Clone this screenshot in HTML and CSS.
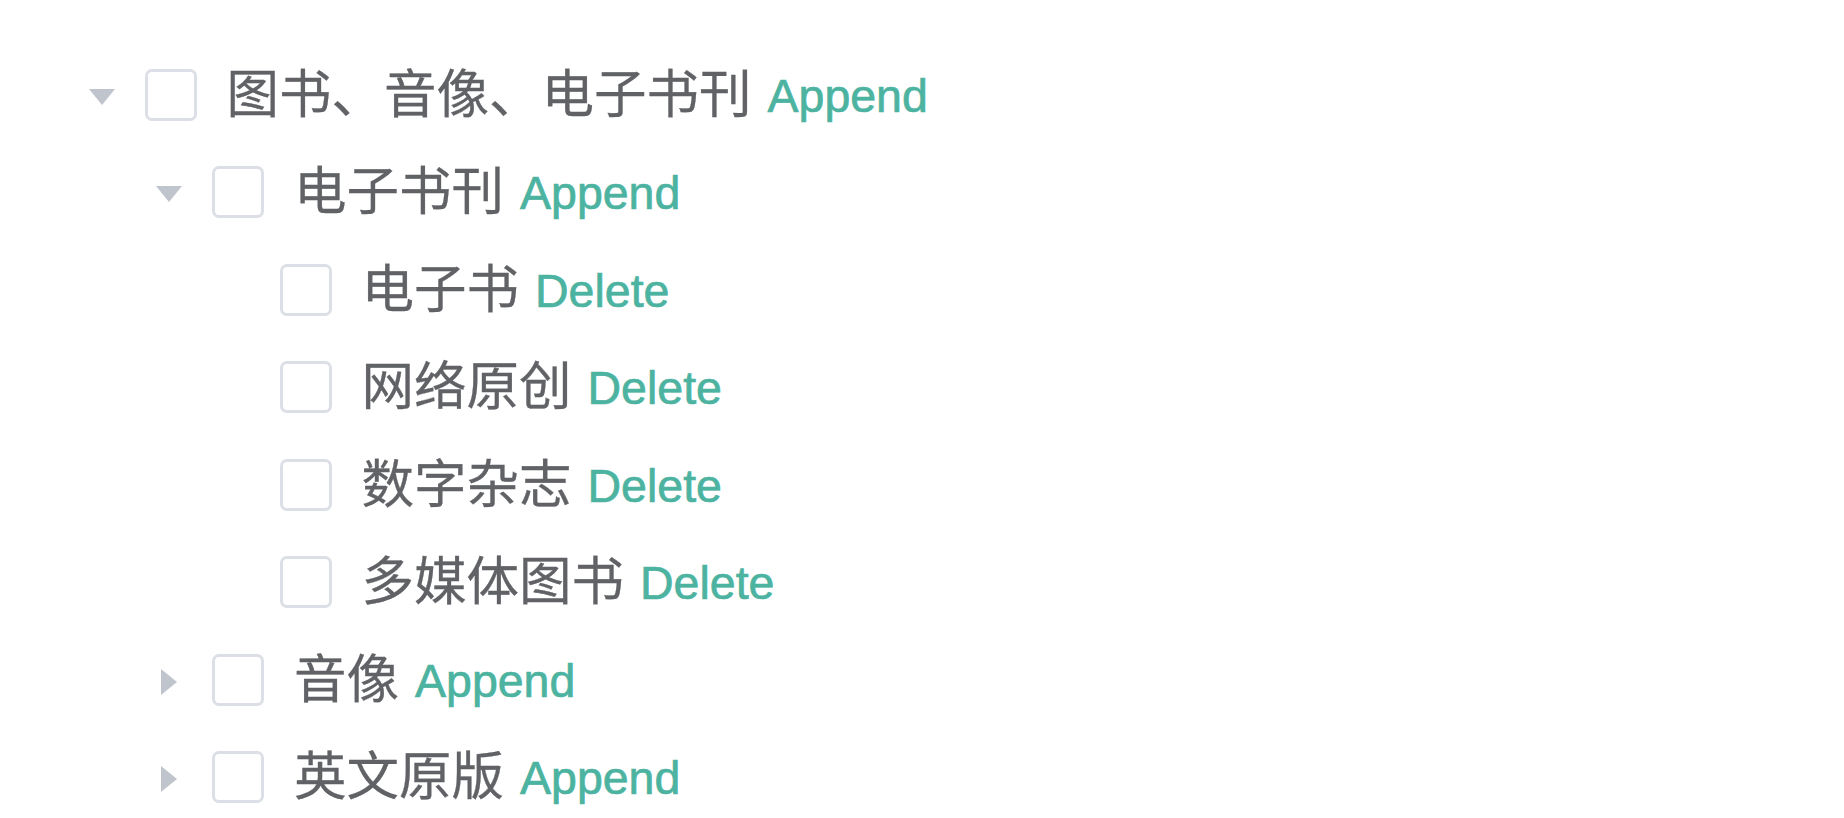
FILE: index.html
```html
<!DOCTYPE html>
<html lang="zh-CN">
<head>
    <meta charset="UTF-8">
    <meta name="viewport" content="width=device-width, initial-scale=1.0">
    <title>Tree</title>
    <link rel="stylesheet" href="styles.css">
</head>
<body>

<div class="tree">
    <div class="tree-node level-1">
        <span class="expand-icon expanded"><svg viewBox="0 0 16 26"><path d="M0 0 L16 13 L0 26 Z"/></svg></span>
        <span class="checkbox"></span>
        <span class="label">图书、音像、电子书刊</span>
        <a class="action">Append</a>
    </div>

    <div class="tree-node level-2">
        <span class="expand-icon expanded"><svg viewBox="0 0 16 26"><path d="M0 0 L16 13 L0 26 Z"/></svg></span>
        <span class="checkbox"></span>
        <span class="label">电子书刊</span>
        <a class="action">Append</a>
    </div>

    <div class="tree-node level-3">
        <span class="expand-icon"></span>
        <span class="checkbox"></span>
        <span class="label">电子书</span>
        <a class="action">Delete</a>
    </div>
    <div class="tree-node level-3">
        <span class="expand-icon"></span>
        <span class="checkbox"></span>
        <span class="label">网络原创</span>
        <a class="action">Delete</a>
    </div>
    <div class="tree-node level-3">
        <span class="expand-icon"></span>
        <span class="checkbox"></span>
        <span class="label">数字杂志</span>
        <a class="action">Delete</a>
    </div>
    <div class="tree-node level-3">
        <span class="expand-icon"></span>
        <span class="checkbox"></span>
        <span class="label">多媒体图书</span>
        <a class="action">Delete</a>
    </div>

    <div class="tree-node level-2">
        <span class="expand-icon"><svg viewBox="0 0 16 26"><path d="M0 0 L16 13 L0 26 Z"/></svg></span>
        <span class="checkbox"></span>
        <span class="label">音像</span>
        <a class="action">Append</a>
    </div>
    <div class="tree-node level-2">
        <span class="expand-icon"><svg viewBox="0 0 16 26"><path d="M0 0 L16 13 L0 26 Z"/></svg></span>
        <span class="checkbox"></span>
        <span class="label">英文原版</span>
        <a class="action">Append</a>
    </div>
</div>

</body>
</html>
```

FILE: styles.css
```css
body {
    margin: 0;
    background-color: #fff;
    font-family: "Liberation Sans", "Noto Sans CJK SC", sans-serif;
    color: #606266;
}
.tree {
    padding-top: 46px;
}
.tree-node {
    display: flex;
    align-items: center;
    height: 97.5px;
}
.level-1 {
    padding-left: 58.5px;
}
.level-2 {
    padding-left: 126px;
}
.level-3 {
    padding-left: 193.5px;
}
.expand-icon {
    width: 86px;
    height: 30px;
    flex-shrink: 0;
    display: flex;
    justify-content: center;
    align-items: center;
    margin-top: 4px;
}
.expand-icon svg {
    width: 16px;
    height: 26px;
    fill: #c0c4cc;
}
/* caret points down when the node is open */
.expand-icon.expanded svg {
    transform: rotate(90deg);
}
.checkbox {
    width: 52px;
    height: 52px;
    box-sizing: border-box;
    border: 3px solid #dcdfe6;
    border-radius: 7px;
    background-color: #fff;
    flex-shrink: 0;
    margin-right: 30px;
}
.label {
    font-size: 52.5px;
    line-height: 1;
    white-space: nowrap;
    -webkit-text-stroke: 0.3px #606266;
}
.action {
    margin-left: 16px;
    font-size: 46.5px;
    line-height: 1;
    color: #4db3a1;
    -webkit-text-stroke: 0.7px #4db3a1;
    cursor: pointer;
    margin-top: 2px;
}
```
